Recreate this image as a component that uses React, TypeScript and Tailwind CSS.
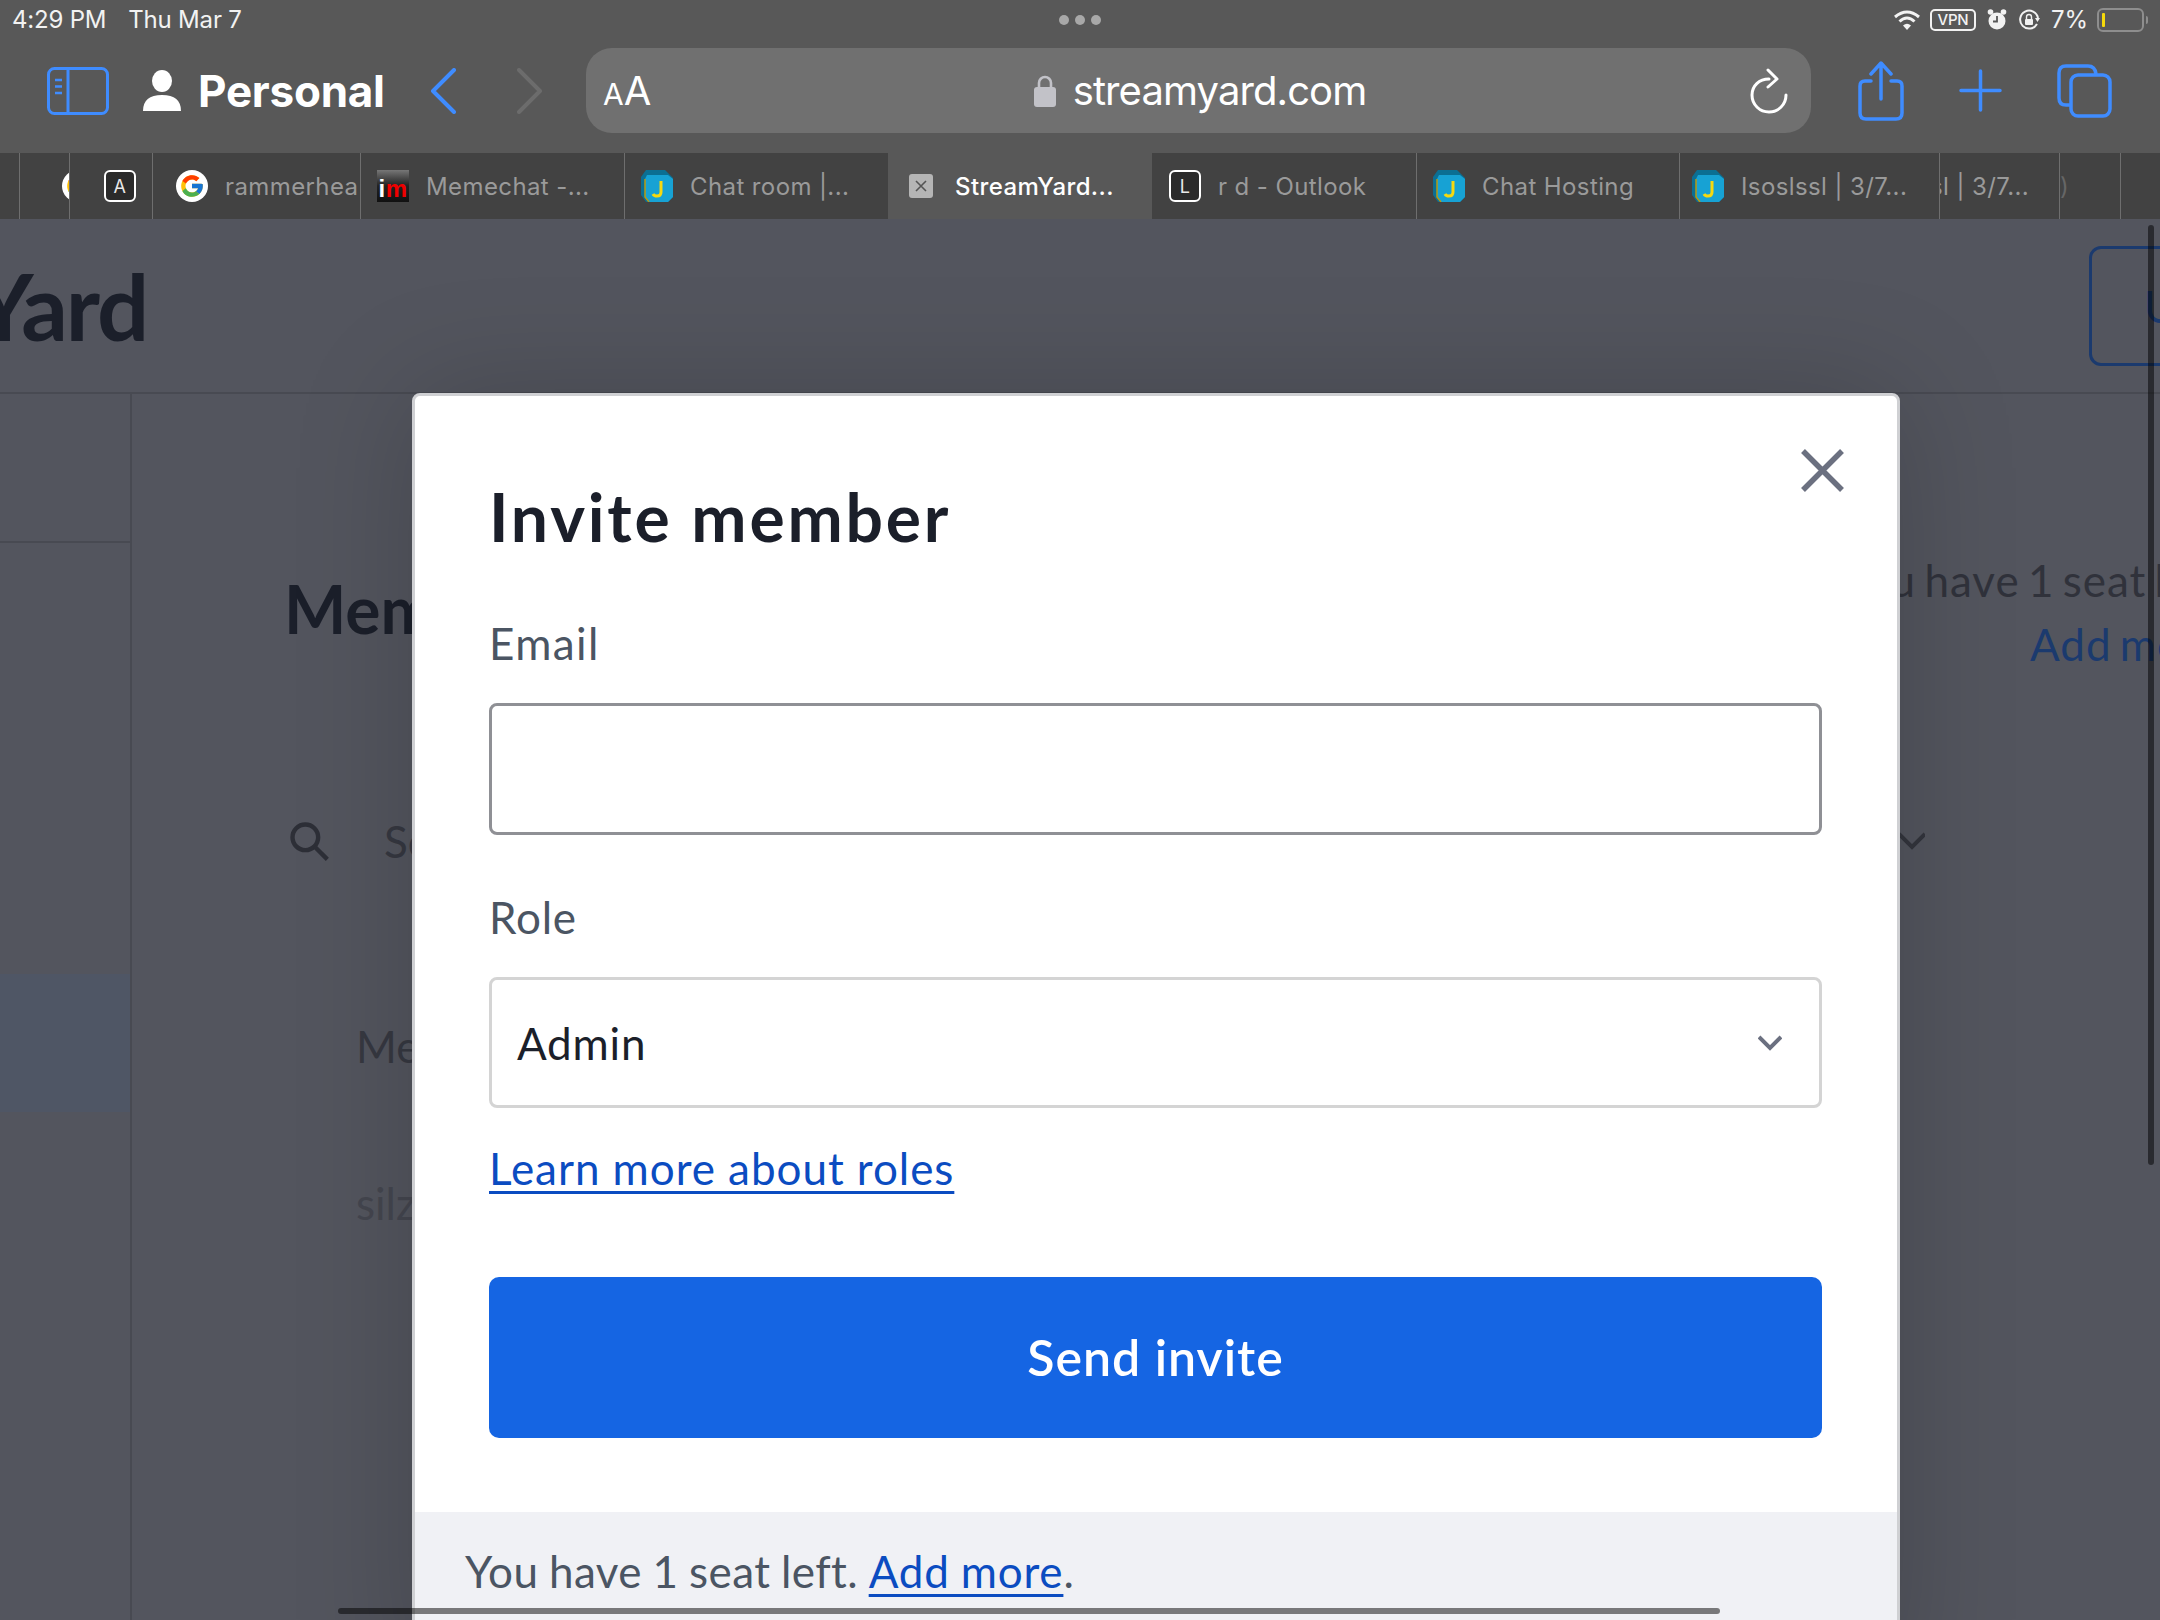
import React from 'react'
import { FcGoogle } from 'react-icons/fc'

const sf = 'font-["Inter","Liberation_Sans",sans-serif]'

function JIcon() {
  return (
    <svg width="32" height="32" viewBox="0 0 32 32" className="shrink-0">
      <polygon points="5,0 24,0 32,8 32,27 27,32 5,32 0,25 0,7" fill="#0b6f93" />
      <polygon points="6,5 27,5 32,9 32,27 27,32 8,32 4,27 4,9" fill="#17a2d4" />
      <path d="M4 9 L4 27 L8 32" stroke="#b79a12" strokeWidth="1.5" fill="none" />
      <path d="M20 11 V22 Q20 26 16 26 Q13 26 12 24" stroke="#f6d90f" strokeWidth="3" fill="none" />
    </svg>
  )
}

function LetterIcon({ letter }: { letter: string }) {
  return (
    <span className="flex h-[32px] w-[32px] shrink-0 items-center justify-center rounded-[6px] border-2 border-white bg-[#2b2b2b] text-[18px] text-[#e8e8e8]">
      {letter}
    </span>
  )
}

function GoogleIcon() {
  return (
    <span className="flex h-[32px] w-[32px] shrink-0 items-center justify-center rounded-full bg-white">
      <FcGoogle size={26} />
    </span>
  )
}

function ImIcon() {
  return (
    <span className='flex h-[32px] w-[32px] shrink-0 items-end justify-center bg-gradient-to-b from-[#777] via-[#222] to-[#111] pb-[3px] font-["Liberation_Sans",sans-serif] text-[24px] leading-[20px] font-bold'>
      <span className="text-white">i</span>
      <span className="text-[#f00000]">m</span>
    </span>
  )
}

function CloseTabIcon() {
  return (
    <span className="flex h-[24px] w-[24px] shrink-0 items-center justify-center rounded-[3px] bg-[#b5b5b5]">
      <svg width="12" height="12" viewBox="0 0 12 12" stroke="#555" strokeWidth="1.6">
        <path d="M1 1 L11 11 M11 1 L1 11" />
      </svg>
    </span>
  )
}

type Tab = {
  width: number
  title?: string
  icon?: React.ReactNode
  active?: boolean
  padding?: string
  textClass?: string
}

const tabs: Tab[] = [
  { width: 19 },
  { width: 50, icon: <GoogleIcon />, padding: 'pl-[42px]' },
  { width: 83, icon: <LetterIcon letter="A" />, padding: 'pl-[34px]' },
  { width: 208, icon: <GoogleIcon />, title: 'rammerhea', padding: 'pl-[23px]' },
  { width: 264, icon: <ImIcon />, title: 'Memechat -...', padding: 'pl-[16px]' },
  { width: 264, icon: <JIcon />, title: 'Chat room |...', padding: 'pl-[16px]' },
  { width: 264, icon: <CloseTabIcon />, title: 'StreamYard...', active: true, padding: 'pl-[21px]' },
  { width: 264, icon: <LetterIcon letter="L" />, title: 'r d - Outlook', padding: 'pl-[17px]' },
  { width: 263, icon: <JIcon />, title: 'Chat Hosting', padding: 'pl-[16px]' },
  { width: 260, icon: <JIcon />, title: 'Isoslssl | 3/7...', padding: 'pl-[12px]' },
  { width: 120, title: 'sl | 3/7...', padding: 'pl-0', textClass: 'ml-[-10px]' },
  { width: 61, title: ')', padding: 'pl-0', textClass: 'text-[#666]' },
  { width: 40 },
]

function StatusBar() {
  return (
    <div className={`grid h-[40px] grid-cols-3 items-center px-[12px] text-[24px] tracking-[-0.2px] text-[#f2f2f2] ${sf}`}>
      <div className="flex gap-[22px] whitespace-nowrap">
        <span>4:29 PM</span>
        <span>Thu Mar 7</span>
      </div>
      <div className="flex justify-center gap-[6px]">
        <span className="h-[10px] w-[10px] rounded-full bg-[#a8a8a8]" />
        <span className="h-[10px] w-[10px] rounded-full bg-[#a8a8a8]" />
        <span className="h-[10px] w-[10px] rounded-full bg-[#a8a8a8]" />
      </div>
      <div className="flex items-center justify-end">
        <svg width="28" height="22" viewBox="0 0 28 22" fill="none" stroke="#f2f2f2" strokeWidth="3">
          <path d="M2 8 Q14 -2 26 8" />
          <path d="M6.5 12.5 Q14 5.5 21.5 12.5" />
          <path d="M14 21 L10 16.5 Q14 13 18 16.5 Z" fill="#f2f2f2" stroke="none" />
        </svg>
        <span className="ml-[9px] flex h-[22px] w-[46px] items-center justify-center rounded-[5px] border-2 border-[#f2f2f2] text-[15px] font-medium">
          VPN
        </span>
        <svg width="20" height="24" viewBox="0 0 20 24" className="ml-[11px]">
          <circle cx="10" cy="13" r="8.5" fill="#f2f2f2" />
          <circle cx="3.5" cy="4" r="2.8" fill="#f2f2f2" />
          <circle cx="16.5" cy="4" r="2.8" fill="#f2f2f2" />
          <path d="M10 8 V13.5 H6" stroke="#585858" strokeWidth="1.8" fill="none" />
        </svg>
        <svg width="22" height="22" viewBox="0 0 22 22" className="ml-[11px]">
          <path d="M19 15 A9 9 0 1 1 20 9" stroke="#f2f2f2" strokeWidth="2" fill="none" />
          <path d="M17 9 L22 9 L19.5 13 Z" fill="#f2f2f2" />
          <rect x="7" y="10" width="8" height="6" rx="1" fill="#f2f2f2" />
          <path d="M8.5 10 V8 A2.5 2.5 0 0 1 13.5 8 V10" stroke="#f2f2f2" strokeWidth="1.4" fill="none" />
        </svg>
        <span className="ml-[11px] w-[38px]">7%</span>
        <span className="ml-[8px] flex h-[24px] w-[47px] items-center rounded-[6px] border-2 border-[#8e8e8e] px-[3px]">
          <span className="h-[14px] w-[3px] rounded-[1px] bg-[#f5d90a]" />
        </span>
        <span className="ml-[2px] h-[8px] w-[2px] rounded-r-sm bg-[#8e8e8e]" />
      </div>
    </div>
  )
}

function Toolbar() {
  return (
    <div className={`flex h-[101px] items-center pl-[47px] ${sf}`}>
      <svg width="62" height="48" viewBox="0 0 62 48" fill="none" stroke="#3f8cff" strokeWidth="3" className="shrink-0">
        <rect x="1.5" y="1.5" width="59" height="45" rx="6" />
        <path d="M21 2 V46" />
        <path d="M8 13 H15 M8 19.5 H15 M8 26 H15" strokeWidth="2.5" />
      </svg>
      <svg width="38" height="41" viewBox="0 0 38 41" fill="#fff" className="ml-[34px] shrink-0">
        <ellipse cx="19" cy="11" rx="10" ry="11" />
        <path d="M0 41 Q0 25 19 25 Q38 25 38 41 Z" />
      </svg>
      <span className="ml-[17px] w-[186px] text-[44px] leading-none font-bold tracking-[-0.25px] whitespace-nowrap text-white">Personal</span>
      <svg width="26" height="46" viewBox="0 0 26 46" fill="none" stroke="#3f8cff" strokeWidth="4" strokeLinecap="round" strokeLinejoin="round" className="ml-[46px] shrink-0">
        <path d="M24 2 L3 23 L24 44" />
      </svg>
      <svg width="26" height="46" viewBox="0 0 26 46" fill="none" stroke="#6c6c6c" strokeWidth="4" strokeLinecap="round" strokeLinejoin="round" className="ml-[61px] shrink-0">
        <path d="M2 2 L23 23 L2 44" />
      </svg>
      <div className="ml-[43px] grid h-[85px] w-[1225px] shrink-0 grid-cols-[1fr_auto_1fr] items-center rounded-[26px] bg-[#707070] pr-[19px] pl-[17px]">
        <span className="font-normal whitespace-nowrap text-white">
          <span className="text-[30px]">A</span>
          <span className="text-[40px]">A</span>
        </span>
        <div className="ml-[5px] flex items-center gap-[17px]">
          <svg width="22" height="33" viewBox="0 0 22 33" className="shrink-0">
            <path d="M5 15 V9 A6 6 0 0 1 17 9 V15" stroke="#c2c2c8" strokeWidth="2.6" fill="none" />
            <rect x="0" y="13" width="22" height="20" rx="3" fill="#c2c2c8" />
          </svg>
          <span className="text-[40px] leading-none tracking-[-0.9px] text-white">streamyard.com</span>
        </div>
        <div className="flex justify-end pr-[4px]">
          <svg width="38" height="46" viewBox="0 0 38 46" fill="none" stroke="#fff" strokeWidth="3" strokeLinecap="round" strokeLinejoin="round">
            <path d="M19 11 C9 11 2 18 2 27 C2 37 10 44 19 44 C28 44 36 37 36 27" />
            <path d="M18 2 L27 11 L18 19" />
          </svg>
        </div>
      </div>
      <svg width="46" height="60" viewBox="0 0 46 60" fill="none" stroke="#3f8cff" strokeWidth="3.5" strokeLinecap="round" strokeLinejoin="round" className="ml-[47px] shrink-0">
        <path d="M13 20 H7 Q2 20 2 25 V52 Q2 58 8 58 H38 Q44 58 44 52 V25 Q44 20 39 20 H33" />
        <path d="M23 38 V3 M13 13 L23 2 L33 13" />
      </svg>
      <svg width="43" height="43" viewBox="0 0 43 43" stroke="#3f8cff" strokeWidth="3.5" strokeLinecap="round" className="ml-[55px] shrink-0">
        <path d="M21.5 2 V41 M2 21.5 H41" />
      </svg>
      <svg width="55" height="54" viewBox="0 0 55 54" fill="none" stroke="#3f8cff" strokeWidth="3.5" className="ml-[55px] shrink-0">
        <path d="M13 41 H9 Q2 41 2 34 V9 Q2 2 9 2 H31 Q38 2 39 10" />
        <rect x="14" y="11" width="39" height="41" rx="7" />
      </svg>
    </div>
  )
}

function TabBar() {
  return (
    <div className={`flex h-[66px] bg-[#424242] text-[24px] tracking-[0.4px] ${sf}`}>
      {tabs.map((t, i) => (
        <div
          key={i}
          style={{ width: t.width }}
          className={`flex shrink-0 items-center overflow-hidden whitespace-nowrap ${t.padding ?? ''} ${
            t.active ? 'gap-[22px] bg-[#585858] font-medium text-white' : 'gap-[17px] text-[#9a9a9a]'
          } ${i > 0 && !t.active && !tabs[i - 1].active ? 'border-l border-[#6e6e6e]' : ''}`}
        >
          {t.icon}
          {t.title && <span className={`mt-[1px] ${t.textClass ?? ''}`}>{t.title}</span>}
        </div>
      ))}
    </div>
  )
}

function PageBehind() {
  return (
    <div className='flex-1 overflow-hidden bg-[#53555e] font-["Lato",sans-serif] text-[#1b1f2a]'>
      <div className="flex h-[175px] items-center justify-between border-b-2 border-[#484a52]">
        <span className="ml-[-26px] text-[92px] leading-none font-bold tracking-[-2px]">Yard</span>
        <span className="mr-[-40px] flex h-[120px] w-[111px] items-center rounded-[12px] border-[3px] border-[#1b3a6e] pl-[52px] text-[44px] text-[#1b3a6e]">U</span>
      </div>
      <div className="flex h-[1226px]">
        <div className="w-[132px] shrink-0 border-r-2 border-[#484a52]">
          <div className="h-[149px] border-b-2 border-[#484a52]" />
          <div className="mt-[431px] h-[138px] bg-[#4f5665]" />
        </div>
        <div className="flex-1 pl-[152px]">
          <div className="flex items-start pt-[182px]">
            <span className="w-[1557px] shrink-0 text-[66px] leading-none font-bold">Members</span>
            <div className="mt-[-28px] shrink-0 text-[44px] leading-[64px] tracking-[1px] [word-spacing:-4px] whitespace-nowrap text-[#30323b]">
              <div>You have 1 seat left</div>
              <div className="pl-[189px] text-[#1b3a6e]">Add more</div>
            </div>
          </div>
          <div className="mt-[135px] flex h-[60px] items-center text-[44px] text-[#363841]">
            <svg width="44" height="44" viewBox="0 0 24 24" fill="none" stroke="#2d2f37" strokeWidth="2.4" className="ml-[3px] shrink-0">
              <circle cx="10" cy="10" r="7" />
              <path d="M15 15 L22 22" />
            </svg>
            <span className="ml-[53px] w-[1515px] shrink-0">Search</span>
            <svg width="26" height="20" viewBox="0 0 26 20" fill="none" stroke="#33353d" strokeWidth="4" className="shrink-0">
              <path d="M0 3 L13 16 L26 3" />
            </svg>
          </div>
          <div className="mt-[153px] pl-[72px] text-[44px] leading-none text-[#363841]">Member</div>
          <div className="mt-[113px] pl-[72px] text-[44px] leading-none text-[#44464f]">silz</div>
        </div>
      </div>
    </div>
  )
}

function InviteModal() {
  return (
    <div className='absolute top-[393px] left-[412px] h-[1300px] w-[1488px] rounded-t-[8px] border-[3px] border-[#cfd0d3] bg-white font-["Lato",sans-serif] shadow-[0_0_120px_rgba(0,0,0,0.18)]'>
      <button type="button" aria-label="Close" className="absolute top-[53px] right-[53px]">
        <svg width="43" height="43" viewBox="0 0 43 43" stroke="#6b7080" strokeWidth="5.5">
          <path d="M2 2 L41 41 M41 2 L2 41" />
        </svg>
      </button>
      <div className="pt-[81px] pr-[75px] pl-[74px]">
        <h2 className="h-[80px] text-[66px] leading-[80px] font-bold tracking-[2.8px] text-[#1b1f2a]">Invite member</h2>
        <div className="mt-[61px] h-[50px] text-[44px] leading-[50px] tracking-[1.4px] text-[#4b5563]">Email</div>
        <div className="mt-[35px] h-[132px] rounded-[8px] border-[3px] border-[#8f9095]" />
        <div className="mt-[57px] h-[50px] text-[44px] leading-[50px] tracking-[0.8px] text-[#4b5563]">Role</div>
        <div className="mt-[35px] flex h-[131px] items-center justify-between rounded-[8px] border-[3px] border-[#d4d4d4] pr-[37px] pl-[25px] text-[44px] tracking-[0.8px] text-[#1b1f2a]">
          <span>Admin</span>
          <svg width="24" height="16" viewBox="0 0 24 16" fill="none" stroke="#6b7080" strokeWidth="4">
            <path d="M1 2 L12 13 L23 2" />
          </svg>
        </div>
        <a href="#" className="mt-[35px] block h-[50px] text-[44px] leading-[50px] tracking-[0.95px] text-[#0b4cc1] underline decoration-[3px] underline-offset-[6px]">
          Learn more about roles
        </a>
        <button type="button" className="mt-[84px] flex h-[161px] w-full items-center justify-center rounded-[10px] bg-[#1565e3] text-[50px] font-semibold tracking-[1px] text-white">
          Send invite
        </button>
      </div>
      <div className="mt-[74px] h-[160px] bg-[#f0f1f5] pt-[34px] pl-[50px] text-[44px] leading-[50px] tracking-[0.4px] [word-spacing:-1px] text-[#4b5563]">
        You have 1 seat left.{' '}
        <a href="#" className="tracking-[0.8px] text-[#0b4cc1] underline decoration-[3px] underline-offset-[6px]">Add more</a>.
      </div>
    </div>
  )
}

export default function App() {
  return (
    <div className="relative flex h-[1620px] w-[2160px] flex-col overflow-hidden bg-[#53555e]">
      <div className="h-[153px] shrink-0 bg-[#585858]">
        <StatusBar />
        <Toolbar />
      </div>
      <TabBar />
      <PageBehind />
      <InviteModal />
      {/* overlay scrollbars */}
      <div className="absolute top-[225px] right-[6px] h-[940px] w-[6px] rounded-full bg-black/50" />
      <div className="absolute top-[1608px] left-[338px] h-[6px] w-[1382px] rounded-full bg-black/50" />
    </div>
  )
}
